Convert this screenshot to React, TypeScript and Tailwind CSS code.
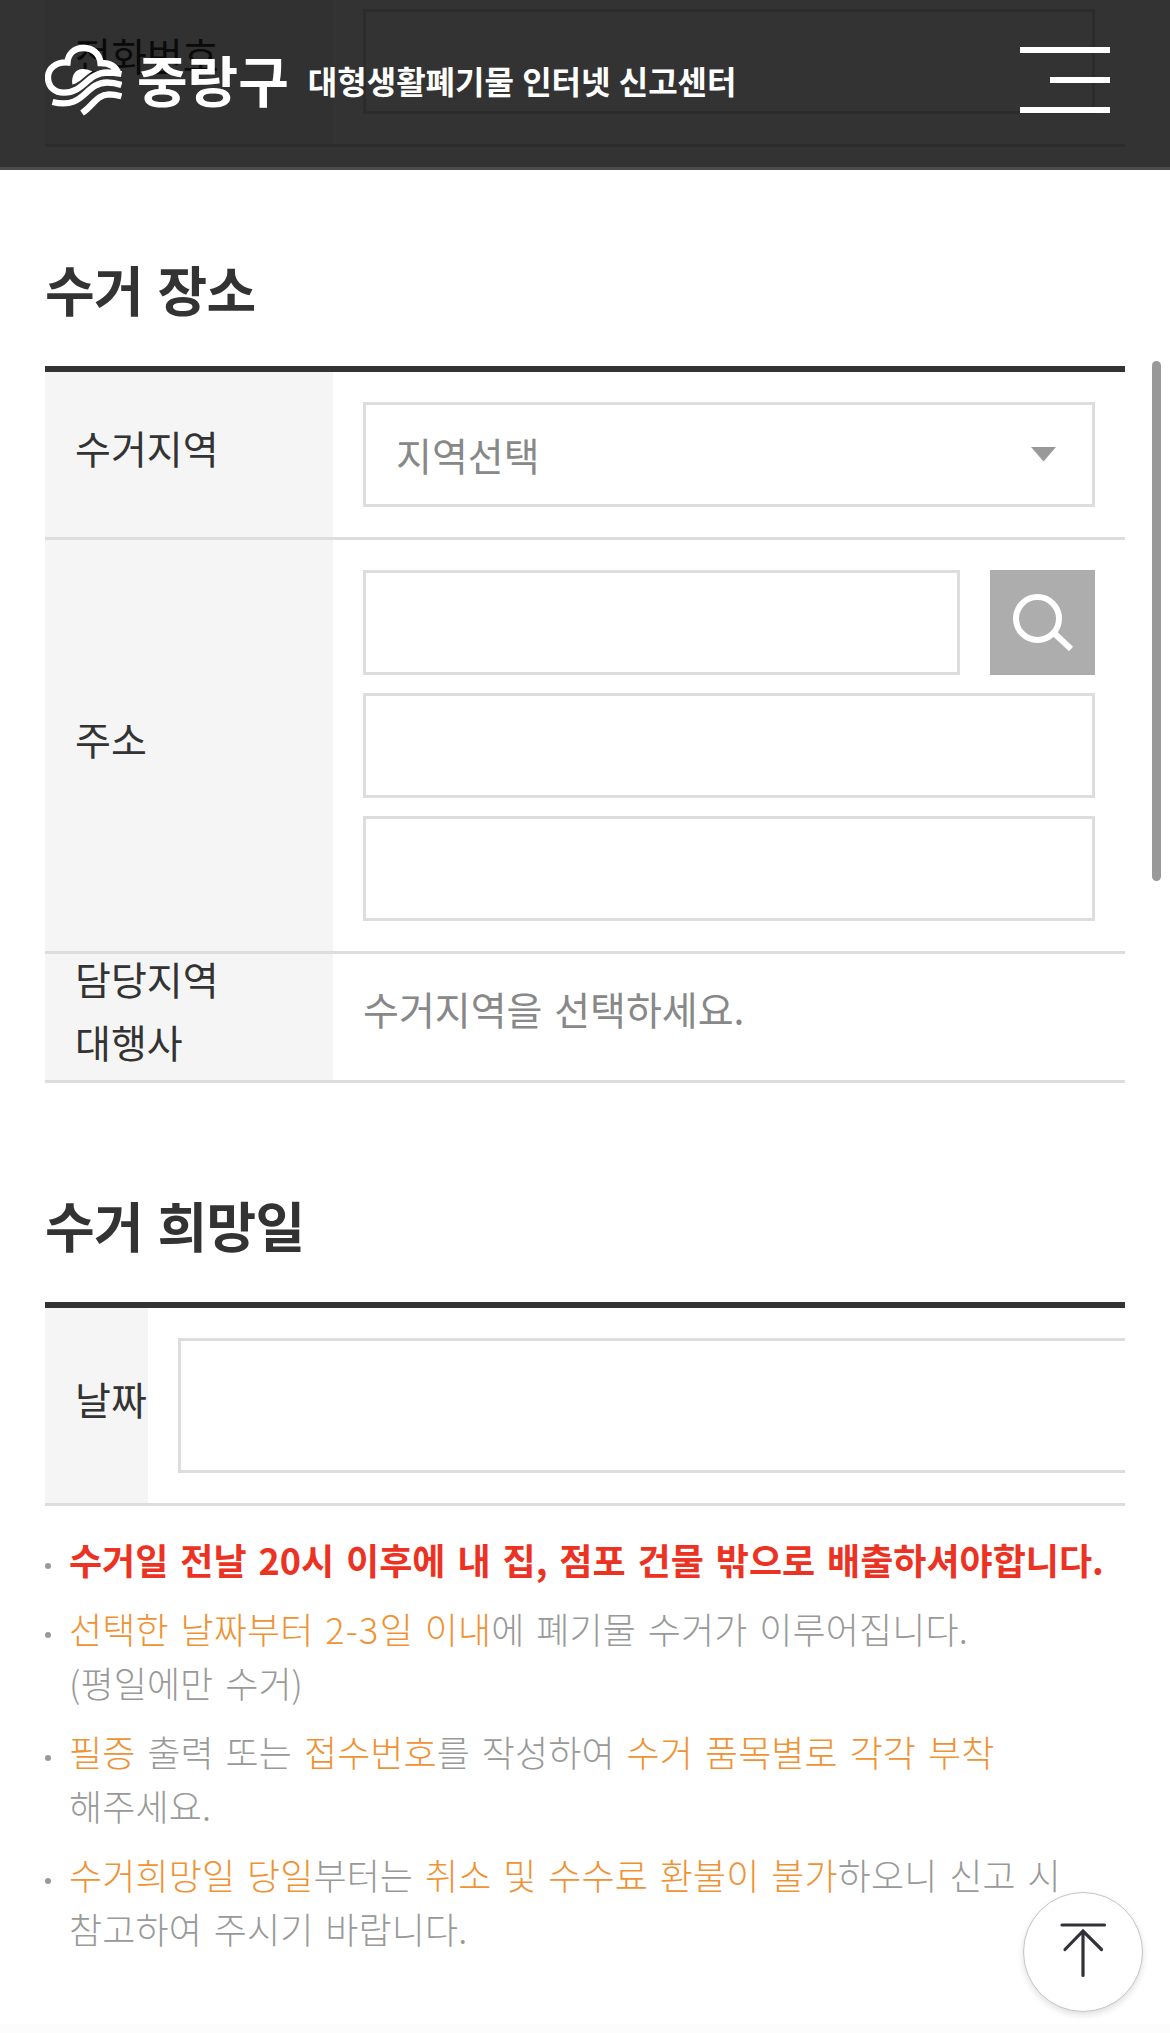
import type { ReactNode } from "react";

interface RowProps {
  label: ReactNode;
  labelClass: string;
  children: ReactNode;
}

function Row({ label, labelClass, children }: RowProps) {
  return (
    <div className="flex border-b-3 border-[#ddd]">
      <div className={`flex shrink-0 items-center bg-[#f5f5f5] pl-[30px] text-[39px] leading-[63px] whitespace-nowrap text-[#333] ${labelClass}`}>
        {label}
      </div>
      <div className="min-w-0 flex-1 overflow-hidden">{children}</div>
    </div>
  );
}

function SectionTitle({ children }: { children: ReactNode }) {
  return (
    <h2 className="text-[54px] leading-[78px] font-bold tracking-[-0.7px] text-[#333] [word-spacing:3px]">
      {children}
    </h2>
  );
}

function Field({ className = "h-[105px]" }: { className?: string }) {
  return <input type="text" className={`block w-full border-3 border-[#ddd] bg-white px-[30px] ${className}`} />;
}

function Note({ children }: { children: ReactNode }) {
  return (
    <li className="flex">
      <span className="mt-[31px] mr-[18px] size-[6px] shrink-0 rounded-full bg-[#999]" />
      <p>{children}</p>
    </li>
  );
}

function Em({ children }: { children: ReactNode }) {
  return <span className="text-[#ef9234]">{children}</span>;
}

function LogoMark() {
  return (
    <svg viewBox="0 0 77 72" className="h-[72px] w-[77px]" fill="none" stroke="#fff" strokeWidth="6.3">
      <path d="M73.5 30C71 22 65 19 55.5 19C54.5 9 47 4 38.5 4C29 4 23 10 22.5 18.5C10 18 3 25 3 33.5C3 43 10 48.7 19 48.7C39 48.7 42 29 62 28.5C67 28.5 71 29 76.5 30" />
      <path d="M7.5 58C40 66 39 39 62 38.5C67 38.5 72 39.5 76.5 41" />
      <path d="M37 69C49 61 51 51 64 50.3C69 50.3 72 51 76.5 52.3" />
      <path d="M27.3 40.5C26 30 32 24 40 25.3C43 25.6 45 26.3 47.5 27.5C40 31 35 39 27.3 40.5Z" fill="#fff" stroke="none" />
    </svg>
  );
}

export default function App() {
  return (
    <div className="relative h-[2033px] w-[1170px] overflow-hidden bg-white font-['Noto_Sans_CJK_KR',sans-serif]">
      {/* Header */}
      <header className="absolute inset-x-0 top-0 z-10 flex h-[170px] items-start justify-between border-b-3 border-[#4c4c4c] bg-black/80 bg-clip-padding pr-[60px] pl-[45px] text-white">
        <div className="flex items-center pt-[44px]">
          <LogoMark />
          <strong className="mb-[3px] ml-[15px] text-[55px] leading-[69px] font-bold">중랑구</strong>
          <span className="ml-[19px] text-[32px] leading-[72px] font-bold whitespace-nowrap [word-spacing:1px]">
            대형생활폐기물 인터넷 신고센터
          </span>
        </div>
        <button className="mt-[47px] flex flex-col items-end gap-[24px]">
          <span className="h-[6px] w-[90px] bg-white" />
          <span className="h-[6px] w-[60px] bg-white" />
          <span className="h-[6px] w-[90px] bg-white" />
        </button>
      </header>

      <main className="px-[45px]">
        {/* Phone number, scrolled under the header */}
        <div className="h-[147px] overflow-hidden">
          <Row label={<span className="mb-[36px]">전화번호</span>} labelClass="h-[144px] w-[288px]">
            <div className="px-[30px] pt-[9px]">
              <Field />
            </div>
          </Row>
        </div>

        {/* Pickup place */}
        <section className="pt-[103px]">
          <SectionTitle>수거 장소</SectionTitle>
          <div className="mt-[38px] border-t-6 border-[#333]">
            <Row label={<span className="mb-[14px]">수거지역</span>} labelClass="w-[288px]">
              <div className="p-[30px]">
                <div className="flex h-[105px] items-center justify-between border-3 border-[#ddd] pr-[35px] pl-[30px] text-[39px] text-[#888]">
                  지역선택
                  <svg viewBox="0 0 27 15" className="h-[15px] w-[27px]">
                    <path d="M1 0H26L13.5 14.5Z" fill="#999" />
                  </svg>
                </div>
              </div>
            </Row>
            <Row label={<span className="mb-[14px]">주소</span>} labelClass="w-[288px]">
              <div className="flex flex-col gap-[18px] p-[30px]">
                <div className="flex gap-[30px]">
                  <Field className="h-[105px] flex-1" />
                  <button className="size-[105px] shrink-0 bg-[#adadad]">
                    <svg viewBox="0 0 105 105" fill="none" stroke="#fff" strokeWidth="6">
                      <circle cx="47.5" cy="48.5" r="21.5" />
                      <path d="M64 63L81 79" />
                    </svg>
                  </button>
                </div>
                <Field />
                <Field />
              </div>
            </Row>
            <Row
              label={
                <span className="mb-[14px]">
                  담당지역
                  <br />
                  대행사
                </span>
              }
              labelClass="h-[126px] w-[288px]"
            >
              <p className="px-[30px] pt-[23px] text-[39px] leading-[63px] text-[#888] [word-spacing:3px]">
                수거지역을 선택하세요.
              </p>
            </Row>
          </div>
        </section>

        {/* Pickup date */}
        <section className="pt-[103px]">
          <SectionTitle>수거 희망일</SectionTitle>
          <div className="mt-[38px] border-t-6 border-[#333]">
            <Row label={<span className="mb-[14px]">날짜</span>} labelClass="w-[103px]">
              <div className="py-[30px] pl-[30px]">
                <Field className="h-[135px] border-r-0" />
              </div>
            </Row>
          </div>
          <ul className="mt-[26px] flex flex-col gap-[15px] text-[36px] leading-[54px] font-light tracking-[0.1px] whitespace-nowrap text-[#999] [word-spacing:3.8px]">
            <Note>
              <strong className="font-bold tracking-normal text-[#ec3323]">
                수거일 전날 20시 이후에 내 집, 점포 건물 밖으로 배출하셔야합니다.
              </strong>
            </Note>
            <Note>
              <Em>
                선택한 날짜부터 <span className="tracking-[1.3px]">2-3</span>일 이내
              </Em>
              에 폐기물 수거가 이루어집니다.
              <br />
              (평일에만 수거)
            </Note>
            <Note>
              <Em>필증</Em> 출력 또는 <Em>접수번호</Em>를 작성하여 <Em>수거 품목별로 각각 부착</Em>
              <br />
              해주세요.
            </Note>
            <Note>
              <Em>수거희망일 당일</Em>부터는 <Em>취소 및 수수료 환불이 불가</Em>하오니 신고 시
              <br />
              참고하여 주시기 바랍니다.
            </Note>
          </ul>
        </section>
      </main>

      {/* Scroll thumb */}
      <div className="absolute top-[361px] right-[9px] h-[520px] w-[9px] rounded-full bg-[#999]" />

      {/* Back to top */}
      <button className="absolute top-[1892px] left-[1023px] size-[120px] rounded-full border border-[#c4c4c4] bg-white shadow-[0_3px_6px_rgba(0,0,0,0.12)]">
        <svg viewBox="0 0 118 118" fill="none" stroke="#32313a" strokeWidth="3.2" strokeLinecap="round">
          <path d="M38 32H80.5M59 38V82.5M41 56.5L59 38L77.5 56.5" />
        </svg>
      </button>
      <div className="absolute inset-x-0 bottom-0 h-[9px] bg-[#fcfcfc]" />
    </div>
  );
}
